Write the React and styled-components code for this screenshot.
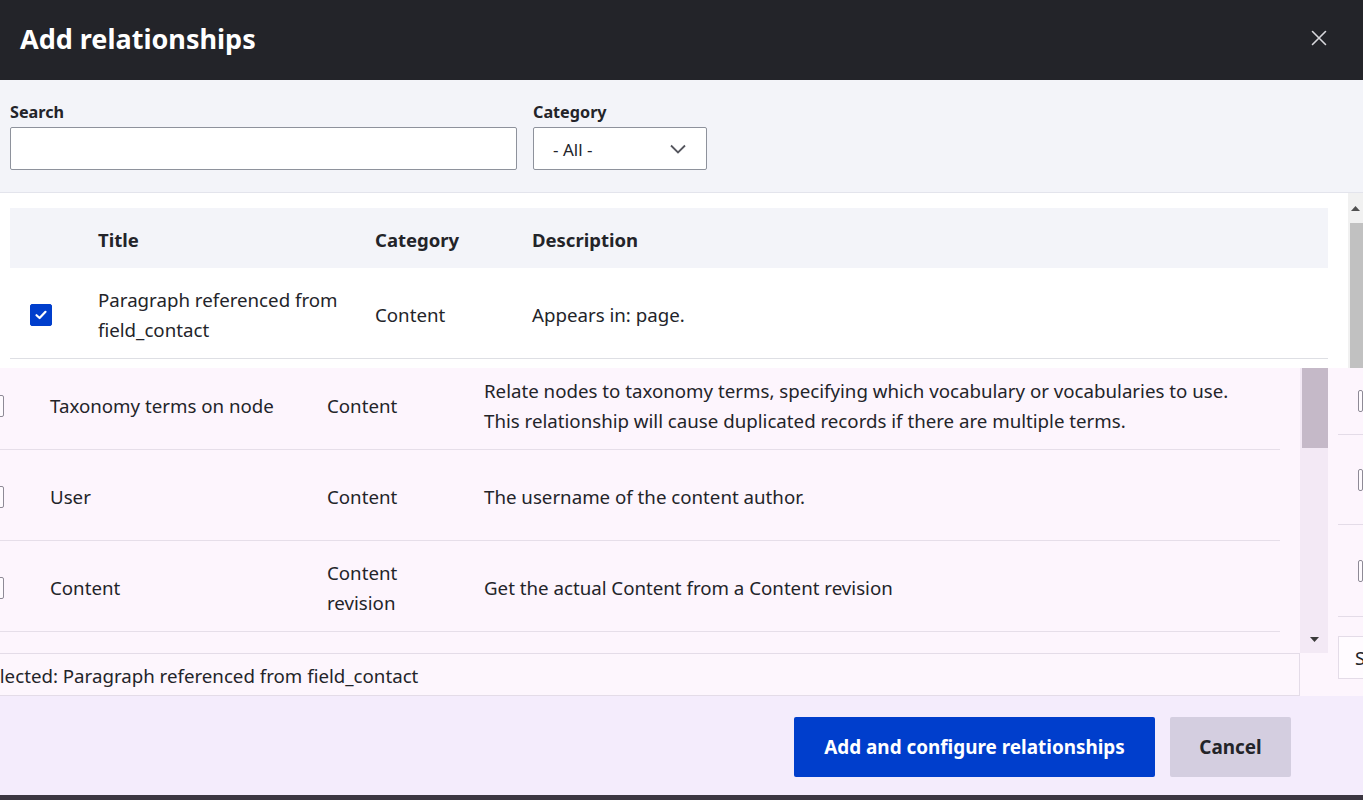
import React from "react";
import styled, { createGlobalStyle } from "styled-components";

const Global = createGlobalStyle`
  html, body { margin: 0; padding: 0; }
  body {
    width: 1363px;
    height: 800px;
    overflow: hidden;
    font-family: "Noto Sans", "Open Sans", sans-serif;
    color: #232429;
    background: #fdf5fd;
  }
  * { box-sizing: border-box; }
`;

const Page = styled.div`
  display: flex;
  flex-direction: column;
  width: 1363px;
  height: 800px;
  overflow: hidden;
`;

const TitleBar = styled.div`
  height: 80px;
  background: #232429;
  display: flex;
  align-items: center;
  justify-content: space-between;
  padding: 0 30px 0 20px;
  flex-shrink: 0;
`;

const Title = styled.h1`
  margin: 0 0 4px 0;
  color: #ffffff;
  font-size: 27px;
  font-weight: 700;
  letter-spacing: 0;
`;

const CloseButton = styled.button`
  border: 0;
  background: transparent;
  width: 28px;
  height: 28px;
  padding: 0;
  display: flex;
  align-items: center;
  justify-content: center;
  margin-bottom: 4px;
`;

const Filters = styled.div`
  background: #f3f4f9;
  border-bottom: 1px solid #e3e4ec;
  padding: 20px 10px 22px 10px;
  display: flex;
  gap: 16px;
  flex-shrink: 0;
`;

const Field = styled.div`
  display: flex;
  flex-direction: column;
  gap: 3px;
`;

const Label = styled.label`
  font-size: 16.2px;
  font-weight: 700;
  line-height: 24px;
  color: #232429;
`;

const TextInput = styled.div`
  width: ${(p) => p.$w}px;
  height: 43px;
  background: #ffffff;
  border: 1px solid #8e929c;
  border-radius: 2px;
`;

const Select = styled.div`
  width: ${(p) => p.$w}px;
  height: 43px;
  background: #ffffff;
  border: 1px solid #8e929c;
  border-radius: 2px;
  display: flex;
  align-items: center;
  justify-content: space-between;
  padding: 1px 20px 0 19px;
  font-size: 17px;
  color: #232429;
`;

const UpperArea = styled.div`
  height: 175px;
  display: flex;
  background: #ffffff;
  flex-shrink: 0;
  overflow: hidden;
`;

const UpperClip = styled.div`
  flex: 1;
  padding: 15px 20px 0 10px;
  overflow: hidden;
`;

const Table = styled.div`
  width: 1318px;
  margin-left: ${(p) => p.$shift || 0}px;
  margin-top: ${(p) => p.$top || 0}px;
`;

const Row = styled.div`
  display: grid;
  grid-template-columns: 68px 277px 157px 1fr;
  align-items: center;
  min-height: ${(p) => (p.$head ? 60 : 91)}px;
  background: ${(p) => (p.$head ? "#f3f4f9" : "transparent")};
  border-bottom: ${(p) => (p.$head ? "0" : `1px solid ${p.$line || "#dedfe4"}`)};
`;

const Cell = styled.div`
  padding: 3px 20px 0 20px;
  font-size: ${(p) => (p.$head ? "18.5px" : "18.7px")};
  font-weight: ${(p) => (p.$head ? 700 : 400)};
  line-height: 30px;
  color: #232429;
`;

const CheckCell = styled.div`
  padding: 4px 20px 0 20px;
  display: flex;
  align-items: center;
`;

const Line = styled.span`
  display: block;
  white-space: nowrap;
`;

const Check = styled.span`
  display: inline-flex;
  width: 22px;
  height: 22px;
  border-radius: 2px;
  align-items: center;
  justify-content: center;
  background: ${(p) => (p.$on ? "#003ecc" : "#fefafe")};
  border: 1px solid ${(p) => (p.$on ? "#003ecc" : "#8e8a96")};
`;

const Scrollbar = styled.div`
  width: ${(p) => p.$w}px;
  display: flex;
  flex-direction: column;
  align-items: stretch;
  background: ${(p) => p.$track};
  flex-shrink: 0;
`;

const ArrowBox = styled.div`
  height: ${(p) => p.$h}px;
  display: flex;
  align-items: center;
  justify-content: center;
`;

const Thumb = styled.div`
  height: ${(p) => p.$h}px;
  margin: ${(p) => p.$m || "0"};
  background: ${(p) => p.$c};
`;

const Spacer = styled.div`
  flex: 1;
`;

const LowerArea = styled.div`
  height: 328px;
  display: flex;
  flex-shrink: 0;
  background: #fdf5fd;
`;

const LeftPane = styled.div`
  width: 1328px;
  display: flex;
  flex-direction: column;
`;

const Viewport = styled.div`
  height: 285px;
  display: flex;
`;

const LowerClip = styled.div`
  width: 1300px;
  overflow: hidden;
`;

const LowerScroll = styled.div`
  width: 28px;
  display: flex;
  flex-direction: column;
  background: #f3e9f5;
`;

const SelectedBox = styled.div`
  width: 1300px;
  height: 43px;
  border-top: 1px solid #e4dce8;
  border-bottom: 1px solid #e4dce8;
  border-right: 1px solid #e4dce8;
  background: #fdf6fd;
  display: flex;
  align-items: center;
  overflow: hidden;
  font-size: 18.7px;
  white-space: nowrap;
  padding-top: 2px;
`;

const SelectedText = styled.span`
  margin-left: -21px;
  color: #232429;
`;

const Sliver = styled.div`
  flex: 1;
  display: flex;
  flex-direction: column;
  padding-left: 10px;
  overflow: hidden;
`;

const SliverRow = styled.div`
  height: ${(p) => p.$h}px;
  border-bottom: 1px solid #e4dce8;
  display: flex;
  align-items: center;
  padding-left: 20px;
  flex-shrink: 0;
`;

const SliverBox = styled.div`
  margin-top: 19px;
  height: 43px;
  width: 40px;
  background: #fffbff;
  border: 1px solid #e4dce8;
  border-right: 0;
  font-size: 18.7px;
  line-height: 41px;
  padding-left: 16px;
  flex-shrink: 0;
`;

const Footer = styled.div`
  height: 99px;
  background: #f4ecfc;
  display: flex;
  align-items: center;
  justify-content: flex-end;
  gap: 15px;
  padding: 0 72px 0 0;
  flex-shrink: 0;
`;

const Button = styled.button`
  height: 60px;
  width: ${(p) => p.$w}px;
  border: 0;
  border-radius: 2px;
  font-family: "Noto Sans", "Open Sans", sans-serif;
  font-size: 18.9px;
  font-weight: 700;
  color: ${(p) => (p.$primary ? "#ffffff" : "#232429")};
  background: ${(p) => (p.$primary ? "#003ecc" : "#d4cee0")};
  padding: 0;
  margin-top: 3px;
`;

const BottomStrip = styled.div`
  height: 5px;
  background: #3b3641;
  flex-shrink: 0;
`;

const CheckMark = () => (
  <svg width="14" height="14" viewBox="0 0 14 14">
    <path d="M2.5 7.2 L5.6 10 L11.5 3.8" fill="none" stroke="#fff" strokeWidth="2.2" strokeLinecap="round" strokeLinejoin="round" />
  </svg>
);

const Tri = ({ up, color = "#555" }) => (
  <svg width="9" height="5" viewBox="0 0 9 5">
    <path d={up ? "M0 5 L4.5 0 L9 5 Z" : "M0 0 L4.5 5 L9 0 Z"} fill={color} />
  </svg>
);

const lowerRows = [
  {
    title: ["Taxonomy terms on node"],
    cat: ["Content"],
    desc: [
      "Relate nodes to taxonomy terms, specifying which vocabulary or vocabularies to use.",
      "This relationship will cause duplicated records if there are multiple terms.",
    ],
  },
  { title: ["User"], cat: ["Content"], desc: ["The username of the content author."] },
  { title: ["Content"], cat: ["Content", "revision"], desc: ["Get the actual Content from a Content revision"] },
  { title: [""], cat: [""], desc: [""] },
];

const Lines = ({ items }) => items.map((t, i) => <Line key={i}>{t}</Line>);

export default function App() {
  return (
    <>
      <Global />
      <Page>
        <TitleBar>
          <Title>Add relationships</Title>
          <CloseButton aria-label="Close">
            <svg width="16" height="16" viewBox="0 0 16 16">
              <path d="M1.5 1.5 L14.5 14.5 M14.5 1.5 L1.5 14.5" stroke="#d8d8dc" strokeWidth="1.6" strokeLinecap="round" />
            </svg>
          </CloseButton>
        </TitleBar>

        <Filters>
          <Field>
            <Label>Search</Label>
            <TextInput $w={507} />
          </Field>
          <Field>
            <Label>Category</Label>
            <Select $w={174}>
              <span>- All -</span>
              <svg width="16" height="10" viewBox="0 0 16 10">
                <path d="M1 1.5 L8 8.5 L15 1.5" fill="none" stroke="#55565e" strokeWidth="1.8" />
              </svg>
            </Select>
          </Field>
        </Filters>

        <UpperArea>
          <UpperClip>
            <Table>
              <Row $head>
                <Cell $head />
                <Cell $head>Title</Cell>
                <Cell $head>Category</Cell>
                <Cell $head>Description</Cell>
              </Row>
              <Row>
                <CheckCell>
                  <Check $on>
                    <CheckMark />
                  </Check>
                </CheckCell>
                <Cell>
                  <Lines items={["Paragraph referenced from", "field_contact"]} />
                </Cell>
                <Cell>Content</Cell>
                <Cell>Appears in: page.</Cell>
              </Row>
            </Table>
          </UpperClip>
          <Scrollbar $w={15} $track="#f1f1f1">
            <ArrowBox $h={30}>
              <Tri up color="#505050" />
            </ArrowBox>
            <Thumb $h={145} $m="0 0 0 2px" $c="#c1c1c1" />
          </Scrollbar>
        </UpperArea>

        <LowerArea>
          <LeftPane>
            <Viewport>
              <LowerClip>
                <Table $shift={-38} $top={-9}>
                  {lowerRows.map((r, i) => (
                    <Row key={i} $line="#e6dee9">
                      <CheckCell>
                        <Check />
                      </CheckCell>
                      <Cell>
                        <Lines items={r.title} />
                      </Cell>
                      <Cell>
                        <Lines items={r.cat} />
                      </Cell>
                      <Cell>
                        <Lines items={r.desc} />
                      </Cell>
                    </Row>
                  ))}
                </Table>
              </LowerClip>
              <LowerScroll>
                <Thumb $h={80} $m="0 0 0 2px" $c="#c5b9c8" />
                <Spacer />
                <ArrowBox $h={28}>
                  <Tri color="#3a3a3a" />
                </ArrowBox>
              </LowerScroll>
            </Viewport>
            <SelectedBox>
              <SelectedText>Selected: Paragraph referenced from field_contact</SelectedText>
            </SelectedBox>
          </LeftPane>
          <Sliver>
            <SliverRow $h={67}>
              <Check />
            </SliverRow>
            <SliverRow $h={90}>
              <Check />
            </SliverRow>
            <SliverRow $h={92}>
              <Check />
            </SliverRow>
            <SliverBox>S</SliverBox>
          </Sliver>
        </LowerArea>

        <Footer>
          <Button $primary $w={361}>Add and configure relationships</Button>
          <Button $w={121}>Cancel</Button>
        </Footer>
        <BottomStrip />
      </Page>
    </>
  );
}
